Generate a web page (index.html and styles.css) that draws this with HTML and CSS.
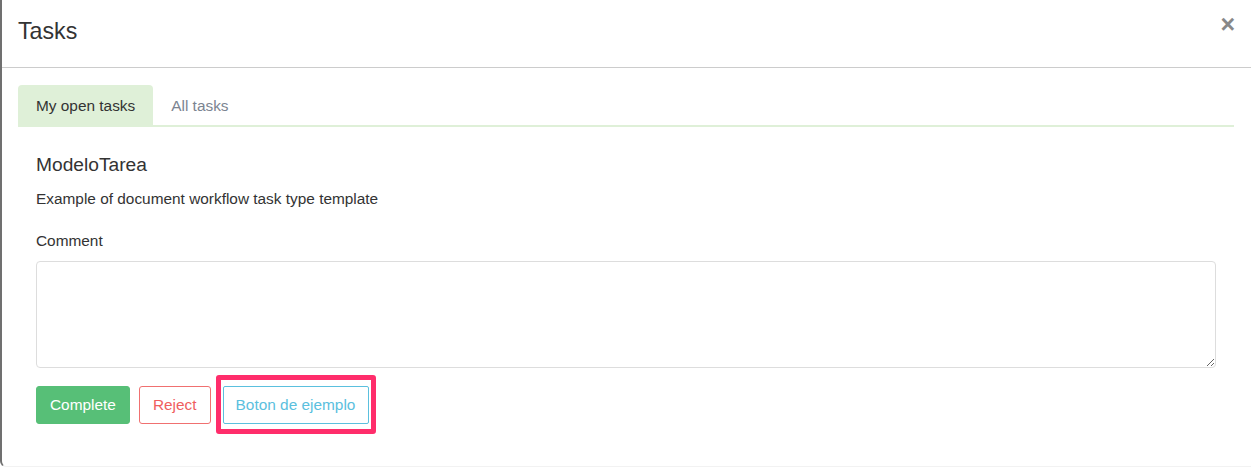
FILE: index.html
```html
<!DOCTYPE html>
<html>
<head>
<meta charset="utf-8">
<link rel="stylesheet" href="styles.css">
</head>
<body>
<div class="modal">
  <div class="modal-header">
    <h4 class="modal-title">Tasks</h4>
    <span class="close">&times;</span>
  </div>
  <div class="modal-body">
    <ul class="tabs">
      <li class="tab active">My open tasks</li>
      <li class="tab">All tasks</li>
    </ul>
    <div class="pane">
      <h3 class="task-name">ModeloTarea</h3>
      <p class="task-desc">Example of document workflow task type template</p>
      <label class="label">Comment</label>
      <textarea class="comment"></textarea>
      <div class="actions">
        <button class="btn btn-success">Complete</button>
        <button class="btn btn-danger">Reject</button>
        <span class="highlight-wrap">
          <button class="btn btn-info">Boton de ejemplo</button>
          <span class="highlight"></span>
        </span>
      </div>
    </div>
  </div>
</div>
</body>
</html>
```
FILE: styles.css
```css
* { box-sizing: border-box; }
html, body { margin: 0; padding: 0; background: #fff; }
body {
  font-family: "Liberation Sans", Arial, sans-serif;
  color: #333;
  width: 1251px;
  height: 468px;
  overflow: hidden;
}
.modal {
  height: 467px;
  border-left: 2px solid #707070;
  border-bottom: 1px solid #f2f2f2;
  border-bottom-left-radius: 6px;
  background: #fff;
}
.modal-header {
  height: 68px;
  border-bottom: 1px solid #ccc;
  display: flex;
  align-items: flex-start;
  justify-content: space-between;
  padding: 0 16px 0 16px;
}
.modal-title {
  margin: 0;
  font-weight: normal;
  font-size: 23.2px;
  line-height: 30px;
  padding-top: 16px;
  color: #333;
}
.close {
  font-size: 25px;
  font-weight: bold;
  color: #888;
  line-height: 1;
  padding-top: 12px;
  padding-right: 0;
}
.modal-body {
  padding: 17px 17px 0 16px;
}
.tabs {
  list-style: none;
  margin: 0;
  padding: 0;
  display: flex;
  border-bottom: 2px solid #dff0d8;
}
.tab {
  font-size: 15.4px;
  line-height: 20px;
  padding: 11px 18px 9px 18px;
  color: #7b8491;
  border-radius: 4px 4px 0 0;
}
.tab.active {
  background: #dff0d8;
  color: #333;
}
.pane {
  padding: 0 18px;
}
.task-name {
  margin: 26px 0 0 0;
  font-size: 19.2px;
  font-weight: normal;
  line-height: 24px;
  color: #333;
}
.task-desc {
  margin: 12px 0 0 0;
  font-size: 15.4px;
  line-height: 20px;
}
.label {
  display: block;
  margin-top: 22px;
  font-size: 15.4px;
  line-height: 20px;
}
.comment {
  display: block;
  width: 100%;
  height: 107px;
  margin-top: 10px;
  border: 1px solid #ddd;
  border-radius: 4px;
  resize: vertical;
  font-family: inherit;
}
.actions {
  display: flex;
  align-items: center;
  margin-top: 18px;
}
.btn {
  font-family: "Liberation Sans", Arial, sans-serif;
  font-size: 15.4px;
  height: 38px;
  padding: 0 13px;
  border-radius: 3px;
  background: #fff;
  border: 1px solid transparent;
  cursor: pointer;
}
.btn-success {
  background: #57bf77;
  border-color: #57bf77;
  color: #fff;
}
.btn-danger {
  margin-left: 9px;
  border-color: #f07070;
  color: #ef5e5e;
}
.highlight-wrap {
  position: relative;
  margin-left: 12px;
  display: inline-flex;
}
.btn-info {
  border-color: #5bc0de;
  color: #5bc0de;
  width: 146px;
  border-radius: 2px;
  padding: 0;
}
.highlight {
  position: absolute;
  left: -7px;
  right: -7px;
  top: -11px;
  bottom: -10px;
  border: 5px solid #ff2d6b;
  border-radius: 3px;
  pointer-events: none;
}
```
